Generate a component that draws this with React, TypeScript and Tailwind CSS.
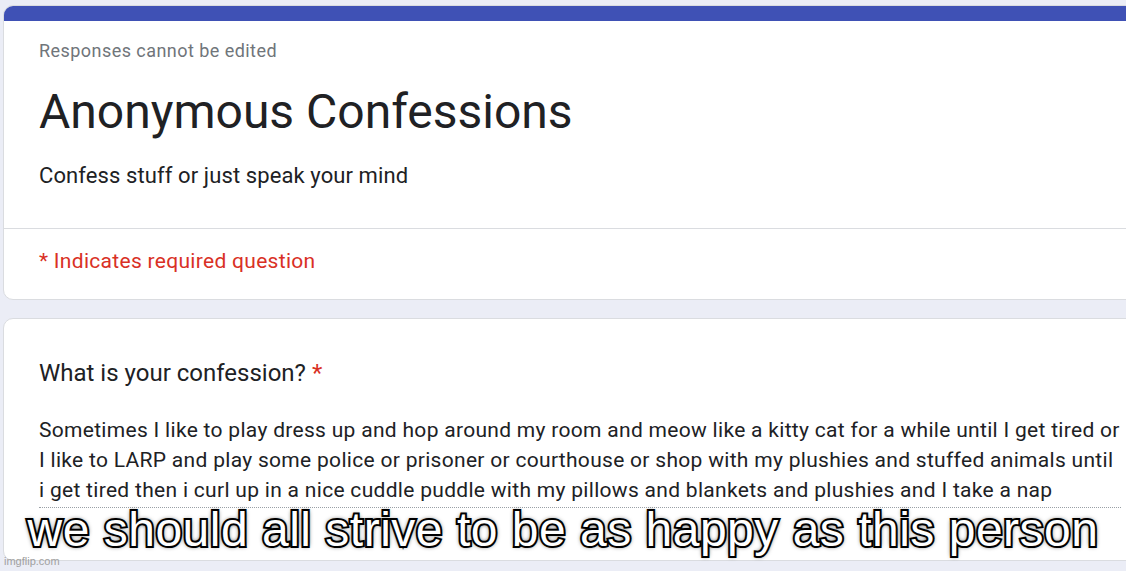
const ANSWER_LINES = [
  'Sometimes I like to play dress up and hop around my room and meow like a kitty cat for a while until I get tired or',
  'I like to LARP and play some police or prisoner or courthouse or shop with my plushies and stuffed animals until',
  'i get tired then i curl up in a nice cuddle puddle with my pillows and blankets and plushies and I take a nap',
];

export default function App() {
  return (
    <div className="relative w-[1126px] h-[571px] overflow-hidden bg-[#ebedf6] font-['Roboto','Liberation_Sans',sans-serif]">
      <div className="pl-[3px] pt-[5px]">
        {/* Header card */}
        <div className="w-[1140px] rounded-[10px] bg-white border border-[#dadce0] overflow-hidden">
          <div className="h-[15px] bg-[#3f51b5]" />
          <div className="pl-[35px] pt-[18px] pb-[37px]">
            <p className="text-[18px] leading-[24px] tracking-[0.45px] text-[#70757a]">Responses cannot be edited</p>
            <h1 className="mt-[21px] text-[48px] leading-[56px] text-[#202124]">Anonymous Confessions</h1>
            <p className="mt-[21px] text-[22px] leading-[30px] tracking-[0.1px] text-[#202124]">Confess stuff or just speak your mind</p>
          </div>
          <div className="border-t border-[#dadce0] pl-[35px] pt-[17px] pb-[23px]">
            <p className="text-[21px] leading-[30px] tracking-[0.3px] text-[#d93025]">* Indicates required question</p>
          </div>
        </div>

        {/* Question card */}
        <div className="mt-[18px] w-[1140px] h-[243px] rounded-[10px] bg-white border border-[#dadce0]">
          <div className="pl-[35px] pt-[39px]">
            <p className="text-[24px] leading-[30px] text-[#202124]">
              What is your confession? <span className="text-[#d93025]">*</span>
            </p>
            <div className="mt-[27px] w-[1082px] pb-[2px] border-b border-dotted border-[#9aa0a6]">
              {ANSWER_LINES.map((line) => (
                <p key={line} className="whitespace-nowrap text-[21px] leading-[30px] tracking-[0.3px] text-[#202124]">
                  {line}
                </p>
              ))}
            </div>
          </div>
        </div>
      </div>

      {/* Meme caption */}
      <div className="absolute left-0 right-0 top-[500px] text-center whitespace-nowrap font-['Liberation_Sans',Arial,sans-serif] text-[48px] leading-[60px] tracking-[0.5px] text-white [-webkit-text-stroke:4px_#000] [paint-order:stroke_fill] [text-shadow:0_0_5px_#000,0_0_2px_#000]">
        we should all strive to be as happy as this person
      </div>

      <div className="absolute left-[4px] top-[554px] font-['Liberation_Sans',Arial,sans-serif] text-[11px] leading-[14px] text-[#a0a0a0]">
        imgflip.com
      </div>
    </div>
  );
}
